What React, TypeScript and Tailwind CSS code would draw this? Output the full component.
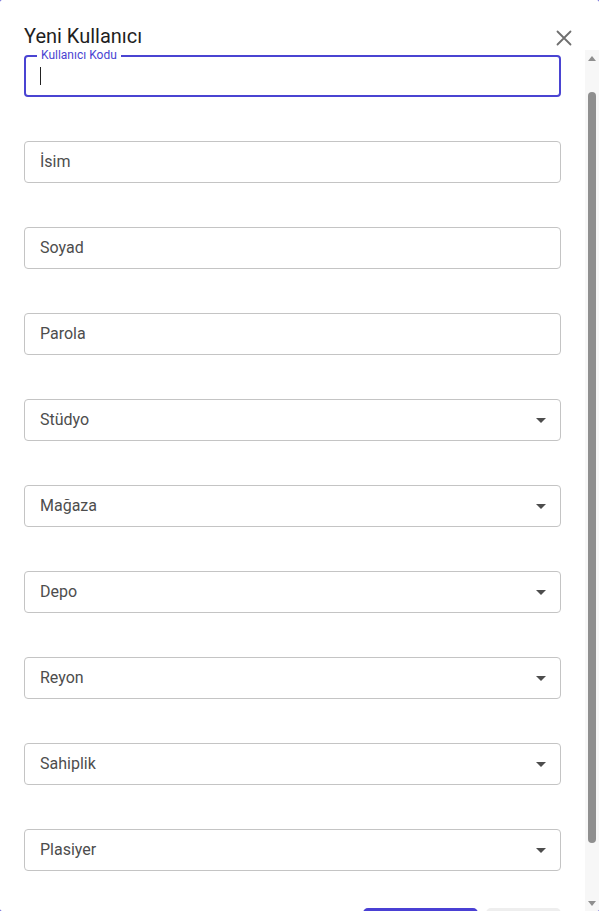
import React from 'react';

const fields: { label: string; select?: boolean }[] = [
  { label: 'İsim' },
  { label: 'Soyad' },
  { label: 'Parola' },
  { label: 'Stüdyo', select: true },
  { label: 'Mağaza', select: true },
  { label: 'Depo', select: true },
  { label: 'Reyon', select: true },
  { label: 'Sahiplik', select: true },
  { label: 'Plasiyer', select: true },
];

const Caret: React.FC = () => (
  <svg width="10" height="5" viewBox="0 0 10 5" className="shrink-0">
    <path d="M0 0 L10 0 L5 5 Z" fill="#4d4d4d" />
  </svg>
);

const App: React.FC = () => {
  return (
    <div className="w-[599px] h-[911px] bg-[#4b44cf]" style={{ fontFamily: 'Roboto, "Liberation Sans", sans-serif' }}>
      <div className="w-full h-full bg-white rounded-[2px] overflow-hidden flex flex-col">
        {/* Başlık */}
        <div className="h-[50px] shrink-0 flex items-start justify-between pl-6 pr-[27px] pt-[24px]">
          <h2 className="text-[20px] leading-[26px] font-normal text-[#1f1f1f] -mt-[1px]">Yeni Kullanıcı</h2>
          <button className="w-[16px] h-[16px] flex items-center justify-center mt-[6px]">
            <svg width="16" height="16" viewBox="0 0 16 16">
              <path d="M1.5 1.5 L14.5 14.5 M14.5 1.5 L1.5 14.5" stroke="#6f6f6f" strokeWidth="1.8" strokeLinecap="round" />
            </svg>
          </button>
        </div>

        <div className="flex-1 flex min-h-0">
          {/* Form */}
          <div className="flex-1 px-6 pt-[5px] flex flex-col gap-[44px] overflow-hidden">
            <div className="relative shrink-0 h-[42px] border-2 border-[#4a44d2] rounded-[4px] flex items-center px-[14px]">
              <span className="absolute -top-[9px] left-[11px] bg-white px-[4px] text-[12px] leading-[14px] text-[#4a44d2]">
                Kullanıcı Kodu
              </span>
              <span className="w-px h-[18px] bg-[#222]" />
            </div>

            {fields.map((f) => (
              <div
                key={f.label}
                className="shrink-0 h-[42px] border border-[#c4c4c4] rounded-[4px] flex items-center justify-between pl-[15px] pr-[14px]"
              >
                <span className="text-[16px] text-[#4d4d4d]">{f.label}</span>
                {f.select && <Caret />}
              </div>
            ))}

            <div className="shrink-0 flex justify-end gap-2 -mt-[7px]">
              <button className="w-[115px] h-[36px] rounded-[5px] bg-[#4a40d4] text-white text-sm font-medium">Kaydet</button>
              <button className="w-[75px] h-[36px] rounded-[5px] bg-[#eeeeee] text-[#333] text-sm font-medium">İptal</button>
            </div>
          </div>

          {/* Kaydırma çubuğu */}
          <div className="w-[14px] shrink-0 bg-[#f7f7f7] flex flex-col items-center">
            <div className="h-[14px] flex items-center justify-center mt-[1px]">
              <svg width="8" height="5" viewBox="0 0 8 5">
                <path d="M0 5 L8 5 L4 0 Z" fill="#8f8f8f" />
              </svg>
            </div>
            <div className="w-[8px] mt-[27px] h-[751px] rounded-full bg-[#8f8f8f]" />
            <div className="flex-1" />
            <div className="h-[14px] flex items-center justify-center mb-[1px]">
              <svg width="8" height="5" viewBox="0 0 8 5">
                <path d="M0 0 L8 0 L4 5 Z" fill="#8f8f8f" />
              </svg>
            </div>
          </div>
        </div>
      </div>
    </div>
  );
};

export default App;
